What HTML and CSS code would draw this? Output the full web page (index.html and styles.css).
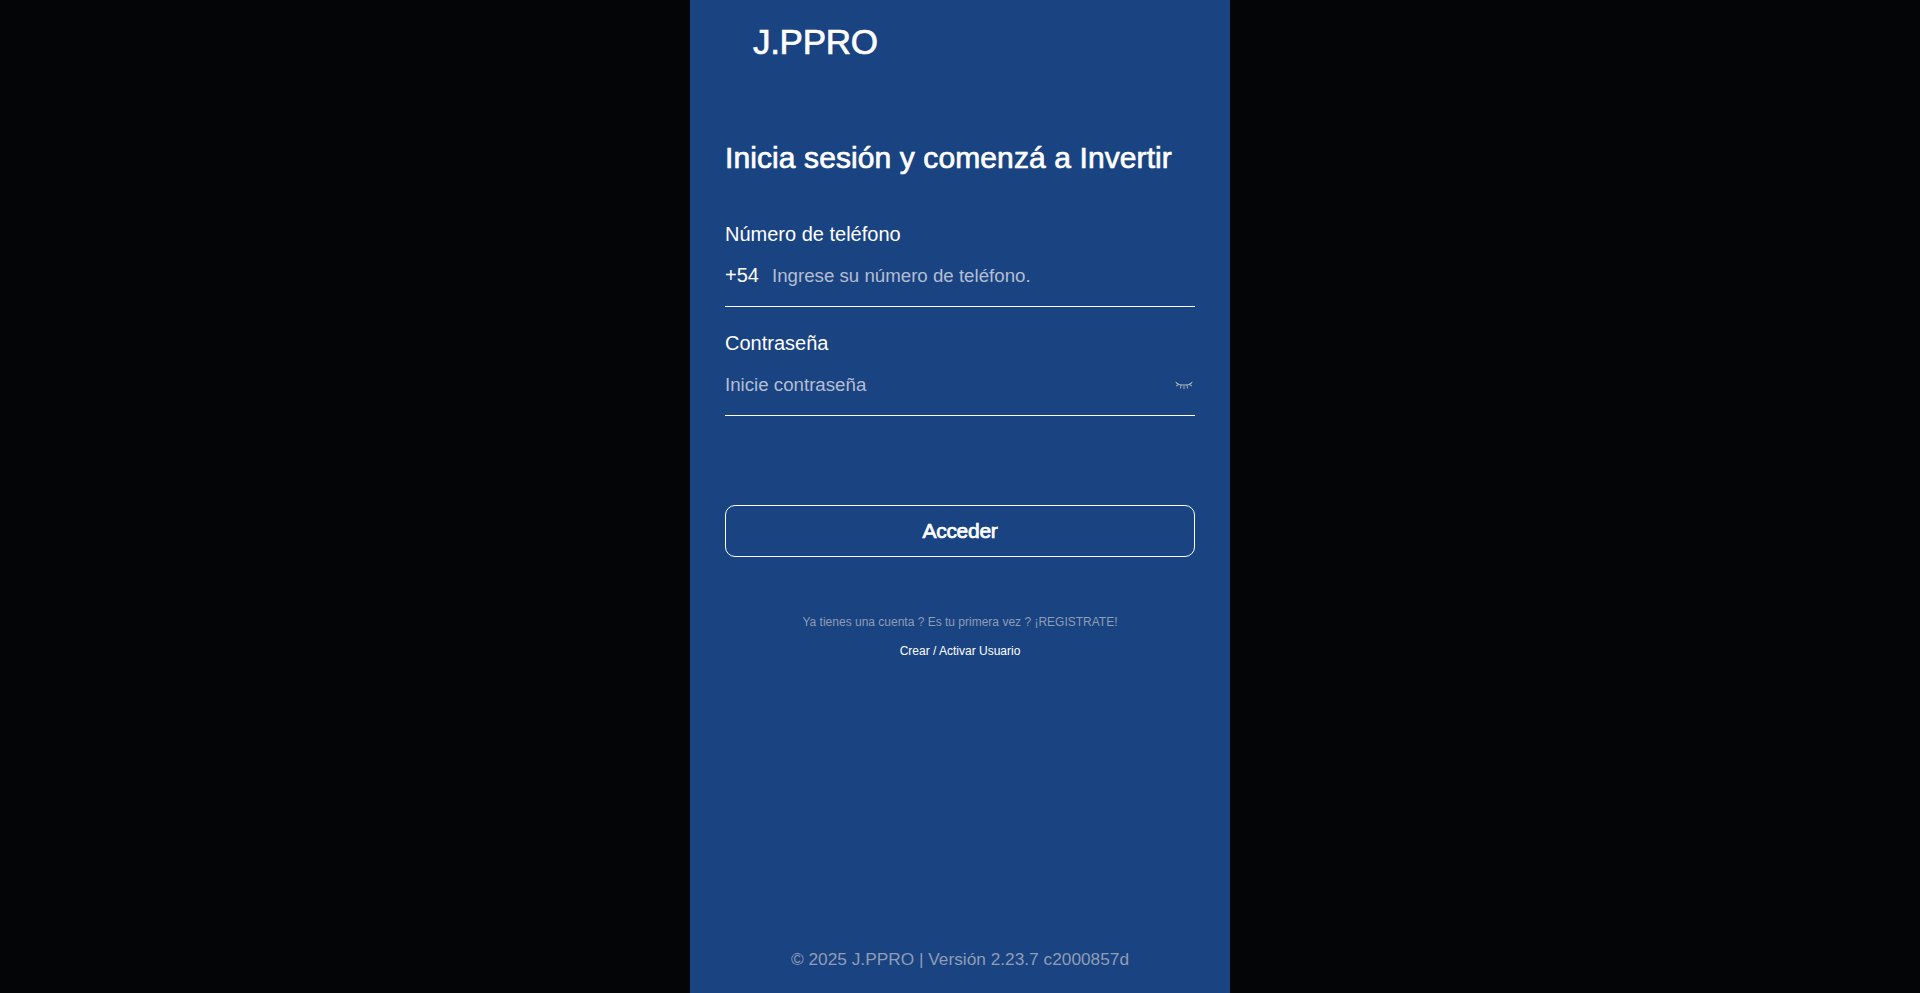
FILE: index.html
```html
<!DOCTYPE html>
<html lang="en">

<head>
    <meta charset="UTF-8">
    <meta name="viewport" content="width=device-width, initial-scale=1.0">
    <title>J.PPRO</title>
    <link rel="stylesheet" href="styles.css">
</head>

<body>
    <div class="panel">
        <div class="brand">J.PPRO</div>
        <form class="login">
            <h1>Inicia sesión y comenzá a Invertir</h1>
            <div class="field">
                <label for="phone">Número de teléfono</label>
                <div class="input-row">
                    <span class="prefix">+54</span>
                    <input type="text" id="phone" placeholder="Ingrese su número de teléfono.">
                </div>
            </div>
            <div class="field">
                <label for="password">Contraseña</label>
                <div class="input-row">
                    <input type="password" id="password" placeholder="Inicie contraseña">
                    <svg class="eye" width="18" height="10" viewBox="0 0 18 10" fill="none" stroke="#b0b6c2" stroke-width="1">
                        <path d="M1.5 3.5C5 5.5 13 5.5 16.5 3.5" />
                        <path d="M0.5 2L4 4.5L1 6M17.5 2L14 4.5L17 6M6 5L5.5 8.5M9 5.5V9M12 5L12.5 8.5" />
                    </svg>
                </div>
            </div>
            <button type="button" class="submit">Acceder</button>
            <p class="hint">Ya tienes una cuenta ? Es tu primera vez ? ¡REGISTRATE!</p>
            <a class="register" href="#">Crear / Activar Usuario</a>
        </form>
        <div class="footer">© 2025 J.PPRO | Versión 2.23.7 c2000857d</div>
    </div>
</body>

</html>
```

FILE: styles.css
```css
* {
    box-sizing: border-box;
}

body {
    margin: 0;
    height: 100vh;
    overflow: hidden;
    background-color: #030507;
    color: #fff;
    font-family: "Liberation Sans", Arial, sans-serif;
}

.panel {
    width: 540px;
    height: 100%;
    margin: 0 auto;
    background-color: #1a4382;
    display: flex;
    flex-direction: column;
}

.brand {
    padding: 24px 0 0 63px;
    font-size: 35px;
    line-height: 36px;
    letter-spacing: -0.3px;
    -webkit-text-stroke: 0.7px #fff;
}

.login {
    flex: 1;
    padding: 0 35px;
    display: flex;
    flex-direction: column;
}

.login h1 {
    margin: 80px 0 0;
    font-size: 30px;
    line-height: 36px;
    font-weight: normal;
    letter-spacing: 0.1px;
    white-space: nowrap;
    -webkit-text-stroke: 0.7px #fff;
}

.field {
    margin-top: 46px;
}

.field + .field {
    margin-top: 24px;
}

.field label {
    display: block;
    font-size: 20px;
    line-height: 24px;
}

.input-row {
    display: flex;
    align-items: center;
    height: 61px;
    padding-bottom: 1px;
    border-bottom: 1px solid #fff;
}

.prefix {
    margin-right: 13px;
    font-size: 20px;
}

.input-row input {
    flex: 1;
    min-width: 0;
    padding: 0;
    border: none;
    outline: none;
    background: none;
    color: #fff;
    font-family: inherit;
    font-size: 18.7px;
}

.input-row input::placeholder {
    color: #b3bed2;
    opacity: 1;
}

.eye {
    margin-right: 2px;
}

.submit {
    height: 52px;
    margin-top: 89px;
    border: 1px solid #fff;
    border-radius: 10px;
    background: none;
    color: #fff;
    font-family: inherit;
    font-size: 21px;
    font-weight: normal;
    letter-spacing: -0.3px;
    -webkit-text-stroke: 0.7px #fff;
}

.hint {
    margin: 57px 0 0;
    text-align: center;
    font-size: 12px;
    line-height: 16px;
    color: #8f9db5;
}

.register {
    margin-top: 13px;
    text-align: center;
    font-size: 12px;
    line-height: 16px;
    color: #fff;
    text-decoration: none;
}

.footer {
    padding-bottom: 23px;
    text-align: center;
    font-size: 17.3px;
    line-height: 22px;
    color: #8f9db5;
}
```
